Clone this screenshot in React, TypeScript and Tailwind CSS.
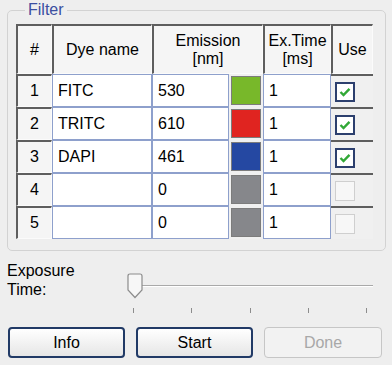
// Filter dialog — XP-style table of dyes, exposure slider and action buttons.

const rows = [
  { n: 1, name: "FITC", em: "530", swatch: "bg-[#78b82a]", use: true },
  { n: 2, name: "TRITC", em: "610", swatch: "bg-[#e02420]", use: true },
  { n: 3, name: "DAPI", em: "461", swatch: "bg-[#2548a2]", use: true },
  { n: 4, name: "", em: "0", swatch: "bg-[#86878b]", use: false },
  { n: 5, name: "", em: "0", swatch: "bg-[#86878b]", use: false },
];

const raised =
  "border-t-2 border-l-2 border-[#5e5e5e] border-r border-b border-r-[#fbfbfb] border-b-[#fbfbfb] bg-[#f5f5f5]";
const field = "border border-[#8ea0cc] bg-white flex items-center pl-[5px]";

function Check({ on }: { on: boolean }) {
  if (!on) {
    return <div className="w-[20px] h-[20px] border border-[#cfcfcf] bg-[#f7f7f7]" />;
  }
  return (
    <div className="w-[20px] h-[20px] border-2 border-[#2c3f6e] bg-white flex items-center justify-center">
      <svg width="12" height="10" viewBox="0 0 12 10">
        <path d="M1.5 5 L4.5 8 L10.5 1.8" fill="none" stroke="#31a836" strokeWidth="2.4" />
      </svg>
    </div>
  );
}

function Button({ label, disabled }: { label: string; disabled?: boolean }) {
  return (
    <button
      className={
        disabled
          ? "w-[118px] h-[31px] rounded-[4px] border border-[#c6c6c6] bg-[#f2f2f2] text-[#a8a8a8] text-[16px]"
          : "w-[117px] h-[31px] rounded-[4px] border-2 border-[#213a66] bg-gradient-to-b from-white to-[#e6e6e6] text-black text-[16px]"
      }
    >
      {label}
    </button>
  );
}

export default function App() {
  return (
    <div className="w-[392px] h-[365px] bg-[#eeeeee] font-['Liberation_Sans',Arial,sans-serif] text-[16px] text-black overflow-hidden">
      {/* ── Filter group box ── */}
      <fieldset className="ml-[7px] w-[379px] h-[251px] border border-[#d2d2d2] rounded-[5px] px-[8px] pt-[4px]">
        <legend className="ml-[9px] px-[3px] text-[#3b4fa0] text-[16px] leading-[20px]">Filter</legend>

        <div className="grid grid-cols-[36px_100px_77px_34px_68px_42px] grid-rows-[50px_repeat(5,33px)]">
          {/* ── Header ── */}
          <div className={`${raised} flex items-center justify-center`}>#</div>
          <div className={`${raised} flex items-center justify-center`}>Dye name</div>
          <div className={`${raised} col-span-2 flex flex-col items-center justify-center leading-[18px]`}>
            <span>Emission</span>
            <span>[nm]</span>
          </div>
          <div className={`${raised} flex flex-col items-center justify-center leading-[18px]`}>
            <span>Ex.Time</span>
            <span>[ms]</span>
          </div>
          <div className={`${raised} flex items-center justify-center`}>Use</div>

          {/* ── Rows ── */}
          {rows.map((r) => (
            <div key={r.n} className="contents">
              <div className={`${raised} flex items-center justify-center`}>{r.n}</div>
              <div className={field}>{r.name}</div>
              <div className={field}>{r.em}</div>
              <div className="bg-[#f0f0f0] p-[2px]">
                <div className={`h-full border border-[#7c7c7c] ${r.swatch}`} />
              </div>
              <div className={field}>1</div>
              <div className="border-t-2 border-[#5e5e5e] bg-[#f0f0f0] flex items-center pl-[4px]">
                <Check on={r.use} />
              </div>
            </div>
          ))}
        </div>
      </fieldset>

      {/* ── Exposure time slider ── */}
      <div className="flex mt-[10px] h-[62px]">
        <div className="w-[120px] pl-[7px] leading-[19px]">
          Exposure
          <br />
          Time:
        </div>
        <div className="relative flex-1">
          <div className="absolute left-[20px] right-[19px] top-[24px] h-[2px] bg-[#a9a9a9] border-b border-white" />
          <svg className="absolute left-[7px] top-[12px]" width="16" height="26" viewBox="0 0 16 26">
            <path
              d="M1 3 Q1 1 3 1 H13 Q15 1 15 3 V17 L8 24.5 L1 17 Z"
              fill="#f7f7f7"
              stroke="#8c8c8c"
              strokeWidth="1.2"
            />
          </svg>
          <div className="absolute left-[13px] right-[25px] top-[47px] flex justify-between">
            {[0, 1, 2, 3, 4].map((i) => (
              <div key={i} className="w-px h-[5px] bg-[#8c8c8c]" />
            ))}
          </div>
        </div>
      </div>

      {/* ── Buttons ── */}
      <div className="flex items-center pl-[8px] mt-[4px] gap-[11px]">
        <Button label="Info" />
        <Button label="Start" />
        <Button label="Done" disabled />
      </div>
    </div>
  );
}
